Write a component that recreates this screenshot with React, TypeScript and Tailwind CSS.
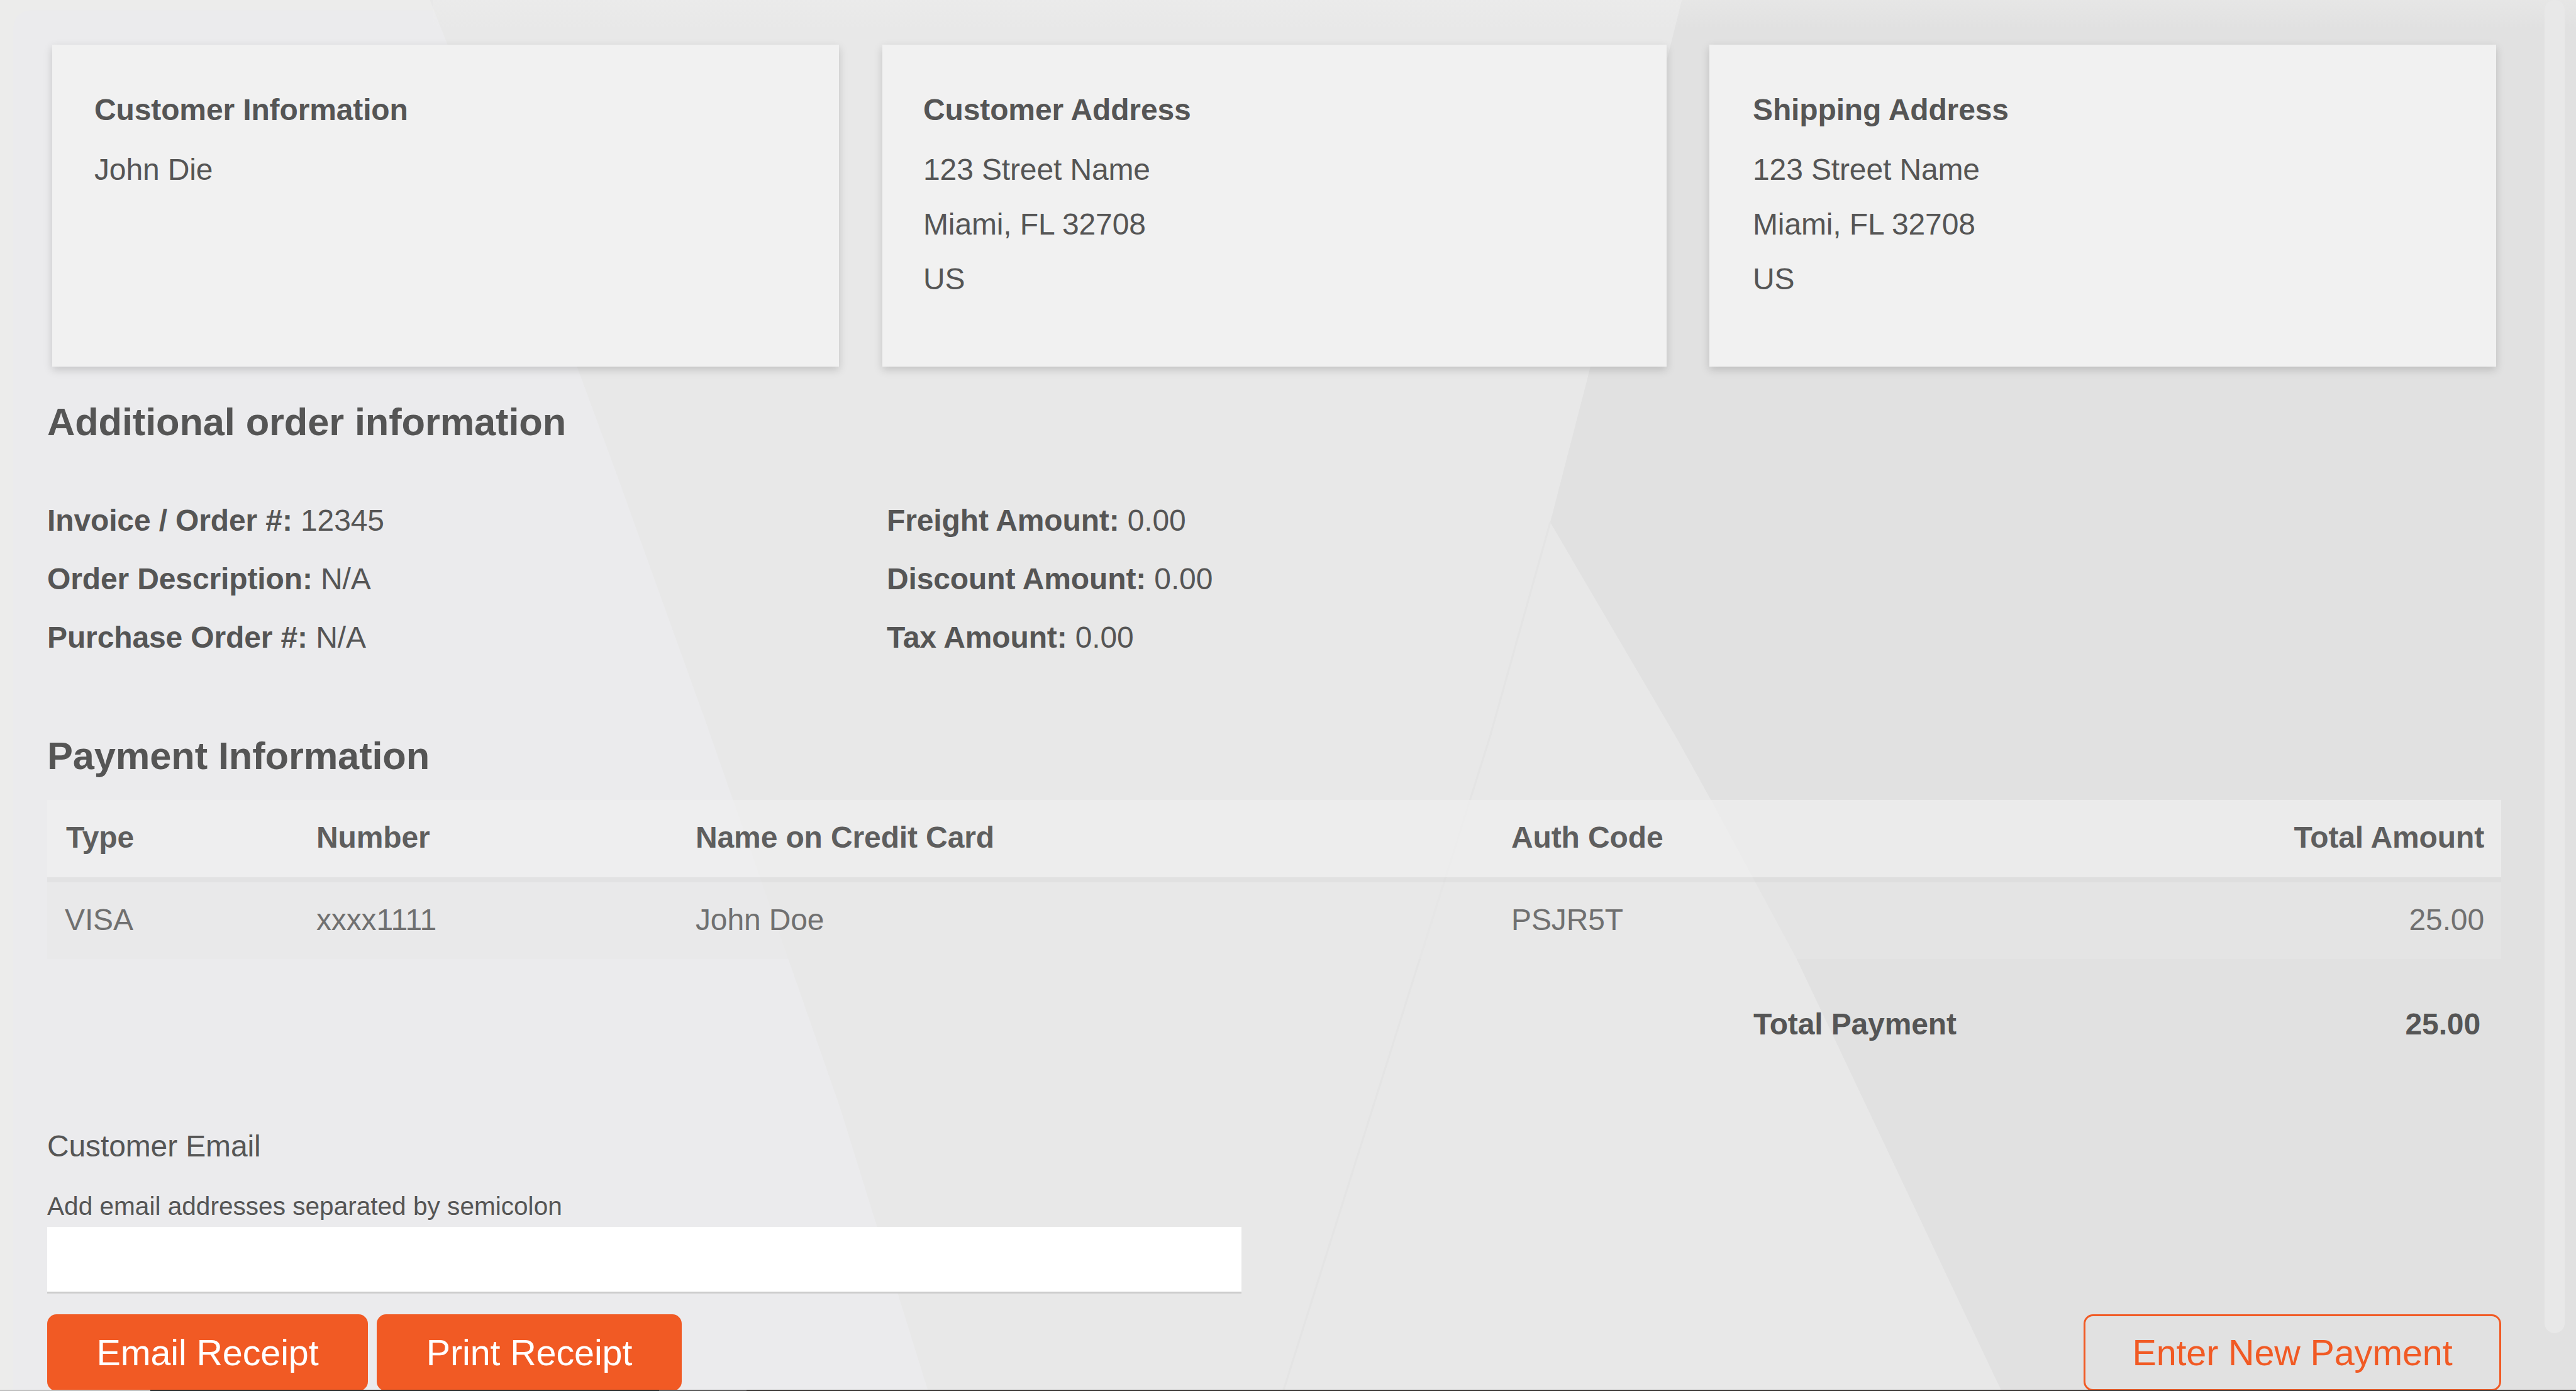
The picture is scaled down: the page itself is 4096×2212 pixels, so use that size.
import React, { useState } from 'react';

interface InfoCardProps {
  title: string;
  lines: string[];
  className: string;
}

interface Payment {
  type: string;
  number: string;
  name: string;
  authCode: string;
  total: string;
}

const address = ['123 Street Name', 'Miami, FL 32708', 'US'];

const orderInfo = [
  { label: 'Invoice / Order #:', value: '12345' },
  { label: 'Order Description:', value: 'N/A' },
  { label: 'Purchase Order #:', value: 'N/A' },
];

const amounts = [
  { label: 'Freight Amount:', value: '0.00' },
  { label: 'Discount Amount:', value: '0.00' },
  { label: 'Tax Amount:', value: '0.00' },
];

const payments: Payment[] = [
  { type: 'VISA', number: 'xxxx1111', name: 'John Doe', authCode: 'PSJR5T', total: '25.00' },
];

// Faceted grey backdrop
function Backdrop() {
  return (
    <svg className="absolute inset-0 h-full w-full" viewBox="0 0 7672 4144" preserveAspectRatio="none">
      <defs>
        <linearGradient id="topFade" x1="0" y1="0" x2="0" y2="1">
          <stop offset="0" stopColor="#f0f0ef" stopOpacity="0.35" />
          <stop offset="1" stopColor="#f0f0ef" stopOpacity="0" />
        </linearGradient>
      </defs>
      <rect width="7672" height="4144" fill="#e8e8e8" />
      <path d="M0 0H1280L1333 133L1724 1107L1832 1400L2105 2159L2502 3300L2764 4144H0Z" fill="#ebebed" />
      <path d="M5009 0L4733 1107L4617 1556L4994 2200L5096 2384L5351 2857L5961 4144H7672V0Z" fill="#e1e1e1" />
      <path d="M4617 1556L4436 2200L3822 4144" fill="none" stroke="#e4e4e4" strokeWidth="6" />
      <path d="M0 0H1280L1292 31H95Q39 31 39 95V4144H0Z" fill="#ececeb" />
      <rect x="1290" width="6382" height="85" fill="url(#topFade)" />
    </svg>
  );
}

function InfoCard({ title, lines, className }: InfoCardProps) {
  return (
    <div className={`h-[512px] bg-[#f1f1f1] pt-[60px] leading-[87px] shadow-[0_5px_13px_rgba(0,0,0,0.17)] ${className}`}>
      <h4 className="mb-2 font-bold">{title}</h4>
      {lines.map((line) => (
        <p key={line}>{line}</p>
      ))}
    </div>
  );
}

function DetailList({ items }: { items: { label: string; value: string }[] }) {
  return (
    <div className="leading-[93px]">
      {items.map((item) => (
        <p key={item.label}>
          <span className="font-bold">{item.label}</span> {item.value}
        </p>
      ))}
    </div>
  );
}

export default function App() {
  const [email, setEmail] = useState('');

  return (
    <div className="relative h-[2212px] w-[4096px] overflow-hidden font-['Liberation_Sans',Arial,sans-serif] text-[48px] tracking-[-0.13px] text-[#555555]">
      <Backdrop />

      <main className="relative flex flex-col pt-[71px] pr-[119px] pl-[75px]">
        {/* Customer cards */}
        <section className="flex pl-2">
          <InfoCard title="Customer Information" lines={['John Die']} className="w-[1251px] pl-[67px]" />
          <InfoCard title="Customer Address" lines={address} className="ml-[69px] w-[1247px] pl-[65px]" />
          <InfoCard title="Shipping Address" lines={address} className="ml-[68px] w-[1251px] pl-[69px]" />
        </section>

        {/* Order details */}
        <h3 className="mt-[48px] text-[61.4px] leading-[80px] font-bold">Additional order information</h3>
        <section className="mt-[70px] grid grid-cols-[1335px_1fr]">
          <DetailList items={orderInfo} />
          <DetailList items={amounts} />
        </section>

        {/* Payments */}
        <h3 className="mt-[102px] text-[61.4px] leading-[80px] font-bold">Payment Information</h3>
        <section className="mt-[30px] leading-[119px]">
          <div className="grid h-[123px] grid-cols-[398px_603px_1297px_1fr_auto] bg-[rgba(240,240,240,0.7)] pr-[27px] pl-[30px] font-bold text-[#5e5e5e]">
            <span>Type</span>
            <span>Number</span>
            <span>Name on Credit Card</span>
            <span>Auth Code</span>
            <span>Total Amount</span>
          </div>
          <div className="h-2 bg-[rgba(220,220,220,0.6)]" />
          {payments.map((p) => (
            <div
              key={p.authCode}
              className="grid h-[122px] grid-cols-[400px_603px_1297px_1fr_auto] bg-[rgba(231,231,231,0.55)] pr-[27px] pl-7 text-[#707070]"
            >
              <span>{p.type}</span>
              <span>{p.number}</span>
              <span>{p.name}</span>
              <span>{p.authCode}</span>
              <span>{p.total}</span>
            </div>
          ))}
        </section>
        <div className="mt-16 flex justify-between pr-[33px] pl-[2713px] leading-[80px] font-bold">
          <span>Total Payment</span>
          <span>25.00</span>
        </div>

        {/* Receipt email */}
        <label className="mt-[114px] leading-[80px]">Customer Email</label>
        <p className="mt-[25px] text-[40.6px] leading-[60px] tracking-normal">Add email addresses separated by semicolon</p>
        <input
          className="mt-[3px] h-[106px] w-[1899px] border-b-3 border-[#cccccc] bg-white px-8 outline-none"
          value={email}
          onChange={(e) => setEmail(e.target.value)}
        />

        <div className="mt-[33px] flex h-[122px] text-[57.5px]">
          <button className="w-[510px] rounded-[15px] bg-[#f15a24] text-white">Email Receipt</button>
          <button className="ml-[14px] w-[485px] rounded-[15px] bg-[#f15a24] text-white">Print Receipt</button>
          <button className="ml-auto w-[664px] rounded-[15px] border-3 border-[#f15a24] text-[#f15a24]">
            Enter New Payment
          </button>
        </div>
      </main>

      {/* Scrollbar thumb */}
      <div className="absolute top-0 right-[18px] h-[2120px] w-8 rounded-full bg-[#e8e8e8]" />

      {/* Edge of the window below */}
      <div className="absolute bottom-0 left-0 flex h-[2.5px] w-full">
        <div className="w-[239px] bg-[#c0c0c0]" />
        <div className="w-[809px] bg-[#2d2d2d]" />
        <div className="w-[139px] bg-[#5c5c5c]" />
        <div className="flex-1 bg-[#3d3a38]" />
      </div>
    </div>
  );
}
